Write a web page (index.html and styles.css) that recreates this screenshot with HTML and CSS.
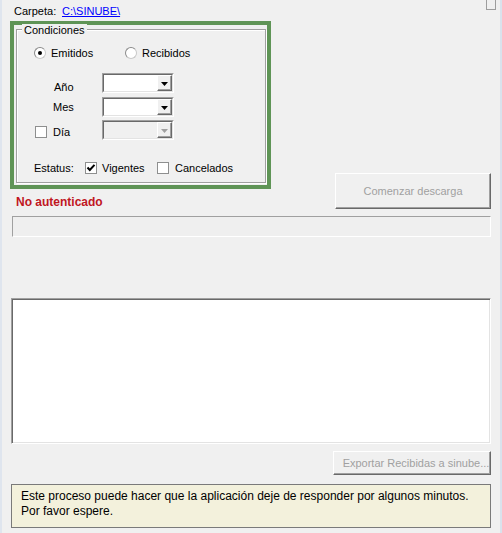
FILE: index.html
```html
<!DOCTYPE html>
<html lang="es">
<head>
<meta charset="utf-8">
<title>Descarga</title>
<link rel="stylesheet" href="styles.css">
</head>
<body>
<div class="window">
  <span class="corner-box"></span>
  <div class="top">
    <div class="left-col">
      <div class="hdr"><span class="hdr-label">Carpeta:</span><a class="folder-link" href="#">C:\SINUBE\</a></div>
      <div class="highlight">
        <div class="group">
          <span class="legend">Condiciones</span>
          <div class="radios">
            <div class="opt opt-first"><span class="radio checked"></span><span class="opt-text">Emitidos</span></div>
            <div class="opt"><span class="radio"></span><span class="opt-text">Recibidos</span></div>
          </div>
          <div class="crow crow-year">
            <span class="cbslot"></span>
            <span class="clabel lbl-year">Año</span>
            <span class="combo"><span class="combo-inner"><span class="combo-field"></span><span class="combo-btn"><svg width="7" height="4" viewBox="0 0 7 4"><polygon points="0,0 7,0 3.5,4" fill="#000"/></svg></span></span></span>
          </div>
          <div class="crow crow-month">
            <span class="cbslot"></span>
            <span class="clabel lbl-month">Mes</span>
            <span class="combo"><span class="combo-inner"><span class="combo-field"></span><span class="combo-btn"><svg width="7" height="4" viewBox="0 0 7 4"><polygon points="0,0 7,0 3.5,4" fill="#000"/></svg></span></span></span>
          </div>
          <div class="crow crow-day">
            <span class="cbslot"><span class="checkbox cb-day"></span></span>
            <span class="clabel lbl-day">Día</span>
            <span class="combo disabled"><span class="combo-inner"><span class="combo-field"></span><span class="combo-btn"><svg width="7" height="4" viewBox="0 0 7 4"><polygon points="0,0 7,0 3.5,4" fill="#a0a0a0"/></svg></span></span></span>
          </div>
          <div class="status-row">
            <span class="status-label">Estatus:</span>
            <span class="checkbox checked"><svg width="10" height="10" viewBox="0 0 10 10"><path d="M1.5 4.5 L3.8 7 L8.5 1.8" fill="none" stroke="#000" stroke-width="2"/></svg></span>
            <span class="status-text st-vig">Vigentes</span>
            <span class="checkbox"></span>
            <span class="status-text st-can">Cancelados</span>
          </div>
        </div>
      </div>
      <div class="noauth">No autenticado</div>
    </div>
    <div class="right-col">
      <div class="btn btn-start">Comenzar descarga</div>
    </div>
  </div>
  <div class="progress"></div>
  <div class="log"></div>
  <div class="btn btn-export">Exportar Recibidas a sinube...</div>
  <div class="info">Este proceso puede hacer que la aplicación deje de responder por algunos minutos.<br>Por favor espere.</div>
</div>
</body>
</html>
```

FILE: styles.css
```css
* { box-sizing: border-box; }
html, body {
  margin: 0;
  padding: 0;
  background: #f0f0f0;
}
body {
  width: 502px;
  height: 533px;
  overflow: hidden;
  font-family: "Liberation Sans", Arial, sans-serif;
  font-size: 11px;
  line-height: 13px;
  color: #000;
}
.window {
  position: relative;
  width: 502px;
  height: 533px;
  border-left: 2px solid #dfe5ee;
  border-right: 2px solid #dae2ec;
  padding-right: 9px;
  display: flex;
  flex-direction: column;
}
.corner-box {
  position: absolute;
  left: 484px;
  top: -1px;
  width: 10px;
  height: 11px;
  border: 1px solid #9d9d9d;
}
.top {
  display: flex;
}
.left-col {
  display: flex;
  flex-direction: column;
}
.right-col {
  flex: 1;
  display: flex;
  justify-content: flex-end;
  align-items: flex-end;
}
.hdr {
  padding: 5px 0 3px 12px;
  height: 21px;
  display: flex;
}
.hdr-label {
  width: 48px;
}
.folder-link {
  color: #0000ff;
  text-decoration: underline;
}
.highlight {
  margin-left: 8px;
  width: 261px;
  height: 168px;
  border: 4px solid #5f9456;
  padding: 4px 1px 0 2px;
}
.group {
  position: relative;
  height: 154px;
  border: 1px solid #a0a0a0;
  box-shadow: 1px 1px 0 #fff, inset 1px 1px 0 #fff;
}
.legend {
  position: absolute;
  left: 5px;
  top: -6px;
  padding: 0 2px;
  background: #f0f0f0;
}
.radios {
  margin-top: 17px;
  padding-left: 17px;
  height: 12px;
  display: flex;
  align-items: center;
}
.opt {
  display: flex;
  align-items: center;
}
.opt-first {
  width: 91px;
}
.radio {
  width: 12px;
  height: 12px;
  border-radius: 50%;
  border: 1px solid #8a8a8a;
  border-bottom-color: #c8c8c8;
  border-right-color: #c8c8c8;
  background: #fff;
  margin-right: 5px;
  display: flex;
  align-items: center;
  justify-content: center;
}
.radio.checked::after {
  content: "";
  width: 4px;
  height: 4px;
  border-radius: 50%;
  background: #000;
}
.crow {
  display: flex;
  align-items: flex-start;
  height: 20px;
  padding-left: 18px;
}
.crow-year { margin-top: 14px; }
.crow-month { margin-top: 4px; }
.crow-day { margin-top: 3px; }
.cbslot {
  width: 18px;
  height: 20px;
  padding-top: 6px;
}
.clabel {
  width: 49px;
}
.lbl-year { margin-top: 8px; padding-left: 1px; }
.lbl-month { margin-top: 4px; }
.lbl-day { margin-top: 6px; }
.checkbox {
  display: flex;
  align-items: center;
  justify-content: center;
  width: 12px;
  height: 12px;
  border: 1px solid #8e8f8f;
  background: #fff;
}
.combo {
  width: 72px;
  height: 20px;
  border: 1px solid;
  border-color: #a0a0a0 #fff #fff #a0a0a0;
}
.combo-inner {
  display: flex;
  height: 100%;
  border: 1px solid;
  border-color: #696969 #e3e3e3 #e3e3e3 #696969;
  background: #fff;
}
.combo.disabled .combo-inner {
  background: #f0f0f0;
}
.combo-field {
  flex: 1;
}
.combo-btn {
  width: 15px;
  display: flex;
  align-items: center;
  justify-content: center;
  background: #f0f0f0;
  border: 1px solid;
  border-color: #fff #696969 #696969 #fff;
  box-shadow: inset -1px -1px 0 #a0a0a0;
  padding-top: 1px;
}
.status-row {
  margin-top: 22px;
  height: 12px;
  padding-left: 17px;
  display: flex;
  align-items: center;
}
.status-label {
  width: 51px;
}
.status-text {
  margin-left: 5px;
}
.st-vig {
  width: 55px;
}
.st-can {
  margin-left: 6px;
}
.noauth {
  margin-top: 6px;
  margin-left: 14px;
  height: 14px;
  font-size: 12px;
  line-height: 14px;
  font-weight: bold;
  color: #c0161f;
}
.btn {
  display: flex;
  align-items: center;
  justify-content: center;
  color: #a0a0a0;
  background: #f0f0f0;
  border: 1px solid;
  border-color: #fff #696969 #696969 #fff;
  box-shadow: inset -1px -1px 0 #a0a0a0;
}
.btn-start {
  width: 156px;
  height: 36px;
}
.progress {
  margin-top: 7px;
  margin-left: 10px;
  height: 21px;
  border: 1px solid;
  border-color: #a0a0a0 #fff #fff #a0a0a0;
  background: #efefef;
}
.log {
  margin-top: 61px;
  margin-left: 9px;
  height: 146px;
  border: 1px solid;
  border-color: #a0a0a0 #fff #fff #a0a0a0;
  box-shadow: inset 1px 1px 0 #696969, inset -1px -1px 0 #e3e3e3;
  background: #fff;
}
.btn-export {
  margin-top: 7px;
  align-self: flex-end;
  width: 158px;
  height: 24px;
  padding-left: 8px;
}
.info {
  margin-top: 9px;
  margin-left: 9px;
  height: 44px;
  border: 1px solid #7a7a7a;
  background: #f3f1dc;
  padding: 4px 9px;
  font-size: 12px;
  line-height: 15px;
}
```
